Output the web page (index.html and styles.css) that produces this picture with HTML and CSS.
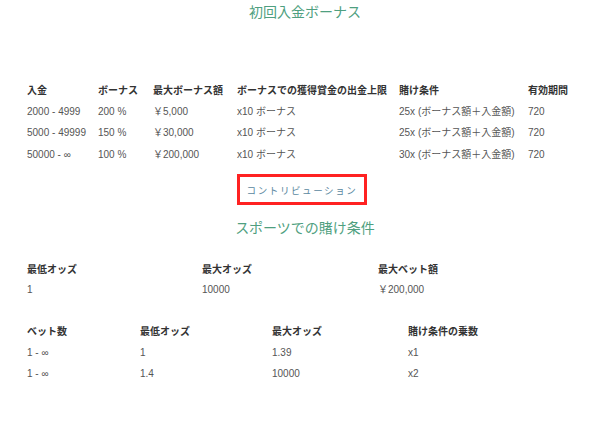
FILE: index.html
```html
<!DOCTYPE html>
<html lang="ja">
<head>
<meta charset="utf-8">
<link rel="stylesheet" href="styles.css">
</head>
<body>
<div class="page">
  <h2 class="title">初回入金ボーナス</h2>
  <div class="table t1">
    <div class="th">入金</div><div class="th">ボーナス</div><div class="th">最大ボーナス額</div><div class="th">ボーナスでの獲得賞金の出金上限</div><div class="th">賭け条件</div><div class="th">有効期間</div>
    <div>2000 - 4999</div><div>200 %</div><div>￥5,000</div><div>x10 ボーナス</div><div>25x (ボーナス額＋入金額)</div><div>720</div>
    <div>5000 - 49999</div><div>150 %</div><div>￥30,000</div><div>x10 ボーナス</div><div>25x (ボーナス額＋入金額)</div><div>720</div>
    <div>50000 - ∞</div><div>100 %</div><div>￥200,000</div><div>x10 ボーナス</div><div>30x (ボーナス額＋入金額)</div><div>720</div>
  </div>
  <div class="btn-row"><div class="btn">コントリビューション</div></div>
  <h2 class="title title2">スポーツでの賭け条件</h2>
  <div class="table t2">
    <div class="th">最低オッズ</div><div class="th">最大オッズ</div><div class="th">最大ベット額</div>
    <div>1</div><div>10000</div><div>￥200,000</div>
  </div>
  <div class="table t3">
    <div class="th">ベット数</div><div class="th">最低オッズ</div><div class="th">最大オッズ</div><div class="th">賭け条件の乗数</div>
    <div>1 - ∞</div><div>1</div><div>1.39</div><div>x1</div>
    <div>1 - ∞</div><div>1.4</div><div>10000</div><div>x2</div>
  </div>
</div>
</body>
</html>
```
FILE: styles.css
```css
html, body {
  margin: 0;
  padding: 0;
  background: #fff;
}
.page {
  font-family: "Liberation Sans", "Noto Sans CJK JP", sans-serif;
  color: #555;
  font-size: 10px;
}
.title {
  margin: 0;
  font-weight: normal;
  font-size: 14px;
  line-height: 22px;
  text-align: center;
  color: #4f9f80;
  font-family: "Noto Sans CJK JP", sans-serif;
}
.table {
  display: grid;
  padding: 0 0 0 27px;
  line-height: 21.5px;
  white-space: nowrap;
}
.th {
  font-family: "Noto Sans CJK JP", sans-serif;
  font-weight: 700;
  color: #333;
}
.t1 {
  margin-top: 57px;
  grid-template-columns: 71px 55px 84px 162px 129px 1fr;
}
.t2 {
  margin-top: 19.5px;
  grid-template-columns: 175px 176px 1fr;
}
.t3 {
  margin-top: 19.5px;
  grid-template-columns: 113px 132px 136px 1fr;
}
.btn-row {
  display: flex;
  justify-content: center;
  margin-top: 9px;
}
.btn {
  box-sizing: border-box;
  width: 130px;
  height: 31px;
  margin-right: 6px;
  border: 3px solid #f22;
  display: flex;
  align-items: center;
  justify-content: center;
  font-family: "Noto Sans CJK JP", sans-serif;
  font-size: 9.5px;
  letter-spacing: 1.6px;
  color: #5a88a0;
}
.title2 {
  margin-top: 11px;
}
```
